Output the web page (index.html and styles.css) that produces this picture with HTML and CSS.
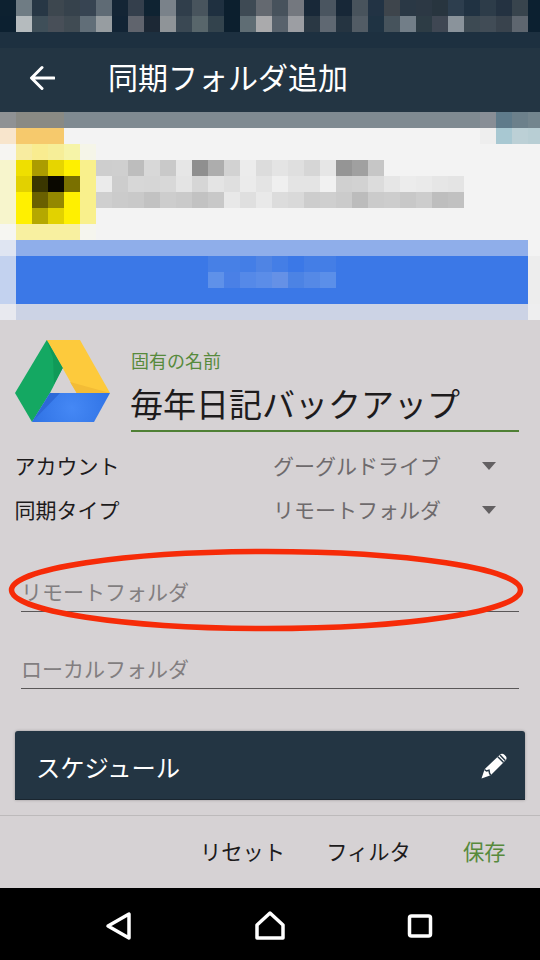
FILE: index.html
```html
<!DOCTYPE html>
<html lang="ja">
<head>
    <meta charset="UTF-8">
    <meta name="viewport" content="width=device-width, initial-scale=1.0">
    <title>同期フォルダ追加</title>
    <link rel="stylesheet" href="styles.css">
</head>
<body>
    <!-- Blurred status bar -->
    <svg class="mosaic status-mosaic" viewBox="0 0 33.75 2" shape-rendering="crispEdges" aria-hidden="true">
        <g>
            <rect x="0" y="0" width="1" height="1" fill="#0d2130"/><rect x="1" y="0" width="1" height="1" fill="#6f7c84"/><rect x="2" y="0" width="1" height="1" fill="#273745"/><rect x="3" y="0" width="1" height="1" fill="#3d474f"/><rect x="4" y="0" width="1" height="1" fill="#36424c"/><rect x="5" y="0" width="1" height="1" fill="#374452"/><rect x="6" y="0" width="1" height="1" fill="#5f6b75"/><rect x="7" y="0" width="1" height="1" fill="#142535"/><rect x="8" y="0" width="1" height="1" fill="#343f4c"/><rect x="9" y="0" width="1" height="1" fill="#0f2332"/><rect x="10" y="0" width="1" height="1" fill="#7a828a"/><rect x="11" y="0" width="1" height="1" fill="#303e4b"/>
            <rect x="12" y="0" width="1" height="1" fill="#48545d"/><rect x="13" y="0" width="1" height="1" fill="#1f3040"/><rect x="14" y="0" width="1" height="1" fill="#0c1f2e"/><rect x="15" y="0" width="1" height="1" fill="#3e4a54"/><rect x="16" y="0" width="1" height="1" fill="#646970"/><rect x="17" y="0" width="1" height="1" fill="#47525c"/><rect x="18" y="0" width="1" height="1" fill="#74787f"/><rect x="19" y="0" width="1" height="1" fill="#182838"/><rect x="20" y="0" width="1" height="1" fill="#4a5560"/><rect x="21" y="0" width="1" height="1" fill="#172737"/><rect x="22" y="0" width="1" height="1" fill="#48535c"/>
            <rect x="23" y="0" width="1" height="1" fill="#223344"/><rect x="24" y="0" width="1" height="1" fill="#3e454c"/><rect x="25" y="0" width="1" height="1" fill="#2a3845"/><rect x="26" y="0" width="1" height="1" fill="#2c3844"/><rect x="27" y="0" width="1" height="1" fill="#28353f"/><rect x="28" y="0" width="1" height="1" fill="#2d3e4e"/><rect x="29" y="0" width="1" height="1" fill="#203242"/><rect x="30" y="0" width="1" height="1" fill="#2d3c49"/><rect x="31" y="0" width="1" height="1" fill="#243241"/><rect x="32" y="0" width="1" height="1" fill="#38444d"/><rect x="33" y="0" width="1" height="1" fill="#0c2030"/>
        </g>
        <g>
            <rect x="0" y="1" width="1" height="1" fill="#0c2030"/><rect x="1" y="1" width="1" height="1" fill="#b5bbbe"/><rect x="2" y="1" width="1" height="1" fill="#3f4f59"/><rect x="3" y="1" width="1" height="1" fill="#484f58"/><rect x="4" y="1" width="1" height="1" fill="#404b53"/><rect x="5" y="1" width="1" height="1" fill="#616e78"/><rect x="6" y="1" width="1" height="1" fill="#979da1"/><rect x="7" y="1" width="1" height="1" fill="#122435"/><rect x="8" y="1" width="1" height="1" fill="#60646d"/><rect x="9" y="1" width="1" height="1" fill="#1c2835"/><rect x="10" y="1" width="1" height="1" fill="#8f9498"/><rect x="11" y="1" width="1" height="1" fill="#3a4853"/>
            <rect x="12" y="1" width="1" height="1" fill="#58666b"/><rect x="13" y="1" width="1" height="1" fill="#33434d"/><rect x="14" y="1" width="1" height="1" fill="#0c1f2e"/><rect x="15" y="1" width="1" height="1" fill="#5f6d74"/><rect x="16" y="1" width="1" height="1" fill="#aaaaac"/><rect x="17" y="1" width="1" height="1" fill="#58626c"/><rect x="18" y="1" width="1" height="1" fill="#9c9ea3"/><rect x="19" y="1" width="1" height="1" fill="#2a3844"/><rect x="20" y="1" width="1" height="1" fill="#5f6872"/><rect x="21" y="1" width="1" height="1" fill="#253441"/><rect x="22" y="1" width="1" height="1" fill="#525c65"/>
            <rect x="23" y="1" width="1" height="1" fill="#1f3343"/><rect x="24" y="1" width="1" height="1" fill="#46535c"/><rect x="25" y="1" width="1" height="1" fill="#727e88"/><rect x="26" y="1" width="1" height="1" fill="#2d3c45"/><rect x="27" y="1" width="1" height="1" fill="#3f4753"/><rect x="28" y="1" width="1" height="1" fill="#8a939b"/><rect x="29" y="1" width="1" height="1" fill="#3d4a53"/><rect x="30" y="1" width="1" height="1" fill="#414c56"/><rect x="31" y="1" width="1" height="1" fill="#39434d"/><rect x="32" y="1" width="1" height="1" fill="#5e666f"/><rect x="33" y="1" width="1" height="1" fill="#0c2030"/>
        </g>
    </svg>

    <!-- App bar -->
    <header class="app-bar">
        <svg class="back-arrow" viewBox="0 0 26 26" aria-hidden="true">
            <path d="M25 13H3M13 2.5L2.5 13L13 23.5"/>
        </svg>
        <h1>同期フォルダ追加</h1>
    </header>

    <!-- Blurred page behind the dialog -->
    <svg class="mosaic page-mosaic" viewBox="0 0 33.75 13" shape-rendering="crispEdges" aria-hidden="true">
        <rect x="0" y="0" width="34" height="13" fill="#f3f3f3"/>
        <!-- dim strip -->
        <rect x="0" y="0" width="34" height="1" fill="#7f8a91"/>
        <rect x="0" y="0" width="1" height="1" fill="#8f9294"/><rect x="1" y="0" width="3" height="1" fill="#898a84"/><rect x="30" y="0" width="1" height="1" fill="#888e96"/><rect x="31" y="0" width="1" height="1" fill="#5f7b8b"/><rect x="32" y="0" width="1" height="1" fill="#6c808b"/><rect x="33" y="0" width="1" height="1" fill="#73858e"/>
        <!-- first row -->
        <rect x="0" y="1" width="1" height="1" fill="#f8e5cc"/><rect x="1" y="1" width="3" height="1" fill="#f6c96c"/><rect x="30" y="1" width="1" height="1" fill="#eeeeee"/><rect x="31" y="1" width="1" height="1" fill="#a8c8d2"/><rect x="32" y="1" width="1" height="1" fill="#bcd0d6"/><rect x="33" y="1" width="1" height="1" fill="#b8ced4"/>
        <!-- yellow icon -->
        <rect x="0" y="2" width="1" height="1" fill="#f6f5f2"/><rect x="1" y="2" width="1" height="1" fill="#f8eca0"/><rect x="2" y="2" width="1" height="1" fill="#f9ec90"/><rect x="3" y="2" width="1" height="1" fill="#f6ee98"/><rect x="4" y="2" width="1" height="1" fill="#f6f4a8"/><rect x="5" y="2" width="1" height="1" fill="#f5f5e8"/>
        <rect x="0" y="3" width="1" height="4" fill="#f7f5cc"/><rect x="5" y="3" width="1" height="4" fill="#f9f08c"/>
        <rect x="1" y="3" width="1" height="1" fill="#efdf00"/><rect x="2" y="3" width="1" height="1" fill="#ac9c00"/><rect x="3" y="3" width="1" height="1" fill="#e6d500"/><rect x="4" y="3" width="1" height="1" fill="#fff000"/>
        <rect x="1" y="4" width="1" height="1" fill="#e2d100"/><rect x="2" y="4" width="1" height="1" fill="#3a3600"/><rect x="3" y="4" width="1" height="1" fill="#0a0800"/><rect x="4" y="4" width="1" height="1" fill="#7a7000"/>
        <rect x="1" y="5" width="1" height="1" fill="#fff000"/><rect x="2" y="5" width="1" height="1" fill="#6a6000"/><rect x="3" y="5" width="1" height="1" fill="#948800"/><rect x="4" y="5" width="1" height="1" fill="#fff000"/>
        <rect x="1" y="6" width="1" height="1" fill="#fff000"/><rect x="2" y="6" width="1" height="1" fill="#b5a800"/><rect x="3" y="6" width="1" height="1" fill="#e2d200"/><rect x="4" y="6" width="1" height="1" fill="#fff000"/>
        <rect x="0" y="7" width="1" height="1" fill="#f6f6f2"/><rect x="1" y="7" width="4" height="1" fill="#f8f0a0"/><rect x="5" y="7" width="1" height="1" fill="#f5f5ee"/>
        <!-- blurred text, line 1 -->
        <rect x="6" y="3" width="1" height="1" fill="#cecece"/><rect x="7" y="3" width="1" height="1" fill="#cfcfcf"/><rect x="8" y="3" width="1" height="1" fill="#bdbdbd"/><rect x="9" y="3" width="1" height="1" fill="#d8d8d8"/><rect x="10" y="3" width="1" height="1" fill="#c9c9c9"/><rect x="11" y="3" width="1" height="1" fill="#e6e6e6"/><rect x="12" y="3" width="1" height="1" fill="#8f8f8f"/><rect x="13" y="3" width="1" height="1" fill="#adadad"/><rect x="14" y="3" width="1" height="1" fill="#d2d2d2"/><rect x="15" y="3" width="1" height="1" fill="#ececec"/><rect x="16" y="3" width="1" height="1" fill="#dcdcdc"/><rect x="17" y="3" width="1" height="1" fill="#e4e4e4"/><rect x="18" y="3" width="1" height="1" fill="#dfdfdf"/><rect x="19" y="3" width="1" height="1" fill="#d6d6d6"/><rect x="20" y="3" width="1" height="1" fill="#e6e6e6"/><rect x="21" y="3" width="1" height="1" fill="#959595"/><rect x="22" y="3" width="1" height="1" fill="#a0a0a0"/><rect x="23" y="3" width="1" height="1" fill="#c6c6c6"/>
        <!-- blurred text, line 2 -->
        <rect x="6" y="4" width="1" height="1" fill="#ebebeb"/><rect x="7" y="4" width="1" height="1" fill="#cdcdcd"/><rect x="8" y="4" width="1" height="1" fill="#d7d7d7"/><rect x="9" y="4" width="1" height="1" fill="#d6d6d6"/><rect x="10" y="4" width="1" height="1" fill="#d8d8d8"/><rect x="11" y="4" width="1" height="1" fill="#e4e4e4"/><rect x="12" y="4" width="1" height="1" fill="#d6d6d6"/><rect x="13" y="4" width="1" height="1" fill="#e4e4e4"/><rect x="14" y="4" width="1" height="1" fill="#dfdfdf"/><rect x="15" y="4" width="1" height="1" fill="#ebebeb"/><rect x="16" y="4" width="1" height="1" fill="#e4e4e4"/><rect x="17" y="4" width="1" height="1" fill="#efefef"/><rect x="18" y="4" width="2" height="1" fill="#e4e4e4"/><rect x="20" y="4" width="1" height="1" fill="#f1f1f1"/><rect x="21" y="4" width="1" height="1" fill="#d0d0d0"/><rect x="22" y="4" width="1" height="1" fill="#d2d2d2"/><rect x="23" y="4" width="1" height="1" fill="#dcdcdc"/><rect x="24" y="4" width="1" height="1" fill="#e6e6e6"/><rect x="25" y="4" width="1" height="1" fill="#ececec"/><rect x="26" y="4" width="1" height="1" fill="#eaeaea"/><rect x="27" y="4" width="1" height="1" fill="#e6e6e6"/><rect x="28" y="4" width="1" height="1" fill="#e4e4e4"/>
        <!-- blurred text, line 3 -->
        <rect x="6" y="5" width="1" height="1" fill="#cfcfcf"/><rect x="7" y="5" width="1" height="1" fill="#cbcbcb"/><rect x="8" y="5" width="1" height="1" fill="#c9c9c9"/><rect x="9" y="5" width="1" height="1" fill="#c2c2c2"/><rect x="10" y="5" width="1" height="1" fill="#cdcdcd"/><rect x="11" y="5" width="1" height="1" fill="#cacaca"/><rect x="12" y="5" width="1" height="1" fill="#c2c2c2"/><rect x="13" y="5" width="1" height="1" fill="#c8c8c8"/><rect x="14" y="5" width="1" height="1" fill="#e8e8e8"/><rect x="15" y="5" width="1" height="1" fill="#dfdfdf"/><rect x="16" y="5" width="1" height="1" fill="#e9e9e9"/><rect x="17" y="5" width="1" height="1" fill="#dcdcdc"/><rect x="18" y="5" width="1" height="1" fill="#d9d9d9"/><rect x="19" y="5" width="1" height="1" fill="#cdcdcd"/><rect x="20" y="5" width="1" height="1" fill="#cfcfcf"/><rect x="21" y="5" width="1" height="1" fill="#cbcbcb"/><rect x="22" y="5" width="1" height="1" fill="#bcbcbc"/><rect x="23" y="5" width="1" height="1" fill="#cbcbcb"/><rect x="24" y="5" width="1" height="1" fill="#cdcdcd"/><rect x="25" y="5" width="1" height="1" fill="#c8c8c8"/><rect x="26" y="5" width="1" height="1" fill="#cdcdcd"/><rect x="27" y="5" width="1" height="1" fill="#bebebe"/><rect x="28" y="5" width="1" height="1" fill="#c1c1c1"/>
        <!-- blue button -->
        <rect x="0" y="8" width="1" height="1" fill="#dfe5f2"/><rect x="1" y="8" width="32" height="1" fill="#8faeea"/>
        <rect x="0" y="9" width="1" height="3" fill="#c3d2ef"/><rect x="1" y="9" width="32" height="3" fill="#3b78e7"/><rect x="33" y="9" width="1" height="3" fill="#ededed"/>
        <rect x="13" y="9" width="2" height="1" fill="#4780e6"/><rect x="15" y="9" width="1" height="1" fill="#447ee6"/><rect x="16" y="9" width="1" height="1" fill="#4f84e4"/><rect x="17" y="9" width="1" height="1" fill="#447ee6"/><rect x="19" y="9" width="2" height="1" fill="#447ee6"/>
        <rect x="13" y="10" width="1" height="1" fill="#5f91e9"/><rect x="14" y="10" width="1" height="1" fill="#4a80e6"/><rect x="15" y="10" width="1" height="1" fill="#5589e8"/><rect x="16" y="10" width="1" height="1" fill="#5b8de8"/><rect x="17" y="10" width="1" height="1" fill="#6591e6"/><rect x="18" y="10" width="1" height="1" fill="#4c83e4"/><rect x="19" y="10" width="1" height="1" fill="#5589e6"/><rect x="20" y="10" width="1" height="1" fill="#5b8fe9"/>
        <rect x="0" y="12" width="1" height="1" fill="#e8e9ef"/><rect x="1" y="12" width="32" height="1" fill="#ccd3e5"/><rect x="33" y="12" width="1" height="1" fill="#eeeeef"/>
    </svg>

    <!-- Add folder form -->
    <main class="form-panel">
        <div class="name-row">
            <svg class="drive-logo" viewBox="15 340 95 83" aria-hidden="true">
                <defs>
                    <radialGradient id="blue-glow" gradientUnits="userSpaceOnUse" cx="72" cy="408" r="42">
                        <stop offset="0" stop-color="#4588f5"/>
                        <stop offset="1" stop-color="#2f72e4"/>
                    </radialGradient>
                </defs>
                <polygon points="46.7,340 80,340 110,393 76.7,393" fill="#fdca3c"/>
                <polygon points="70,382 110,393 76.7,393" fill="#f3bc36"/>
                <polygon points="46.7,340 62.7,368 50,393 32,422 15,393" fill="#14a862"/>
                <polygon points="46.7,340 62.7,368 54,384 53,358" fill="#109a58"/>
                <polygon points="50,393 110,393 94,422 32,422" fill="url(#blue-glow)"/>
                <polygon points="50,393 60,393 32,422" fill="#2d69d8"/>
            </svg>
            <div class="name-field">
                <label class="name-label">固有の名前</label>
                <div class="name-value">毎年日記バックアップ</div>
            </div>
        </div>

        <div class="select-row">
            <span class="select-label">アカウント</span>
            <span class="select-value">グーグルドライブ</span>
            <span class="select-arrow"></span>
        </div>
        <div class="select-row">
            <span class="select-label">同期タイプ</span>
            <span class="select-value">リモートフォルダ</span>
            <span class="select-arrow"></span>
        </div>

        <div class="text-field remote-field">リモートフォルダ</div>
        <div class="text-field local-field">ローカルフォルダ</div>

        <div class="schedule-card">
            <span>スケジュール</span>
            <svg class="pencil" viewBox="0 0 26 26" aria-hidden="true">
                <path class="pencil-body" d="M0.5 25.5L3.6 16.2L18.6 1.9C20 .6 21.8.4 23.4 1.7L24.6 2.9C26 4.4 25.8 6.300 24.4 7.600L9.700 22.300Z"/>
                <path class="pencil-bands" d="M16.800 3.700L22.600 9.500M19 1.900L24.300 7.400M3.500 16.500L5.500 18L8 17.300L8.500 20L9.700 22.300"/>
            </svg>
        </div>

        <footer class="dialog-actions">
            <button>リセット</button>
            <button>フィルタ</button>
            <button class="save">保存</button>
        </footer>

        <!-- Hand drawn annotation -->
        <svg class="annotation" viewBox="0 0 520 92" aria-hidden="true">
            <ellipse cx="258" cy="46" rx="254.500" ry="38.500"/>
        </svg>
    </main>

    <!-- Android navigation bar -->
    <nav class="nav-bar">
        <svg viewBox="0 0 32 32" aria-hidden="true"><path d="M4 16L25 4V28Z"/></svg>
        <svg viewBox="0 0 32 32" aria-hidden="true"><path d="M16 3L29 15V28H3V15Z"/></svg>
        <svg viewBox="0 0 32 32" aria-hidden="true"><rect x="5.500" y="6" width="21" height="20" rx="2"/></svg>
    </nav>
</body>
</html>
```

FILE: styles.css
```css
* {
    box-sizing: border-box;
}
body {
    margin: 0;
    width: 540px;
    height: 960px;
    overflow: hidden;
    display: flex;
    flex-direction: column;
    font-family: "Noto Sans CJK JP", "Noto Sans", sans-serif;
    background-color: #d6d2d4;
}
.mosaic {
    display: block;
    width: 540px;
    flex: none;
}
.status-mosaic {
    height: 32px;
}
.page-mosaic {
    height: 208px;
}

/* App bar */
.app-bar {
    flex: none;
    height: 80px;
    padding-bottom: 4px;
    padding-left: 29px;
    display: flex;
    align-items: center;
    gap: 53px;
    background-color: #233543;
    border-top: 16px solid #1d3040;
    color: #fff;
}
.app-bar h1 {
    margin: 0 0 4px;
    font-size: 30px;
    font-weight: 400;
    line-height: 40px;
    white-space: nowrap;
}
.back-arrow {
    width: 26px;
    height: 26px;
    fill: none;
    stroke: #fff;
    stroke-width: 3;
    stroke-linecap: round;
    stroke-linejoin: round;
}

/* Form */
.form-panel {
    position: relative;
    flex: 1;
    display: flex;
    flex-direction: column;
    padding-top: 20px;
    background-color: #d6d2d4;
    color: #1d1b1c;
}
.name-row {
    display: flex;
    align-items: flex-start;
    gap: 21px;
    padding: 0 21px 0 15px;
}
.drive-logo {
    flex: none;
    width: 95px;
    height: 83px;
}
.name-field {
    flex: 1;
    margin-top: 8px;
    border-bottom: 2px solid #4f8035;
}
.name-label {
    display: block;
    font-size: 18px;
    line-height: 24px;
    color: #578a3c;
}
.name-value {
    margin-top: 9px;
    padding-bottom: 5px;
    font-size: 33px;
    line-height: 44px;
    text-indent: -1px;
    white-space: nowrap;
}
.select-row {
    display: flex;
    align-items: center;
    height: 44px;
    padding-left: 14.500px;
    font-size: 21px;
}
.name-row + .select-row {
    margin-top: 11px;
}
.select-label {
    width: 258.500px;
}
.select-value {
    width: 209px;
    color: #6e6a6c;
    white-space: nowrap;
}
.select-arrow {
    width: 0;
    height: 0;
    margin-top: 2px;
    border-left: 7.500px solid transparent;
    border-right: 7.500px solid transparent;
    border-top: 8px solid #636062;
}
.text-field {
    margin: 0 21px;
    padding-bottom: 5px;
    border-bottom: 1px solid #5a5758;
    font-size: 21px;
    line-height: 30px;
    color: #827e80;
}
.remote-field {
    margin-top: 45px;
}
.local-field {
    margin-top: 41px;
}
.schedule-card {
    height: 69px;
    margin: 42px 15px 0;
    padding: 2px 18px 0 21px;
    display: flex;
    align-items: center;
    justify-content: space-between;
    background-color: #233543;
    border-bottom: 1px solid #1a2630;
    border-radius: 3px 3px 0 0;
    box-shadow: 0 0 3px rgba(0, 0, 0, 0.3);
    color: #fff;
    font-size: 24.300px;
}
.pencil {
    width: 26px;
    height: 26px;
}
.pencil-body {
    fill: #fff;
}
.pencil-bands {
    fill: none;
    stroke: #233543;
    stroke-width: 1.500;
}
.dialog-actions {
    flex: 1;
    margin-top: 15px;
    padding: 0 34.500px 2px 0;
    display: flex;
    align-items: center;
    justify-content: flex-end;
    gap: 41px;
    border-top: 1px solid #bdbabb;
}
.dialog-actions button {
    padding: 0;
    border: none;
    background: none;
    font-family: inherit;
    font-size: 21.300px;
    line-height: 30px;
    color: #1d1b1c;
}
.dialog-actions .save {
    margin-left: 11px;
    color: #578a3c;
}
.annotation {
    position: absolute;
    left: 8px;
    top: 224px;
    width: 520px;
    height: 92px;
    fill: none;
    stroke: #f62b08;
    stroke-width: 5.500;
}

/* Navigation bar */
.nav-bar {
    flex: none;
    height: 72px;
    display: flex;
    align-items: center;
    justify-content: center;
    background-color: #000;
}
.nav-bar svg {
    width: 32px;
    height: 32px;
    margin: 3px 59px 0;
    fill: none;
    stroke: #fff;
    stroke-width: 3.500;
    stroke-linejoin: round;
}
```
